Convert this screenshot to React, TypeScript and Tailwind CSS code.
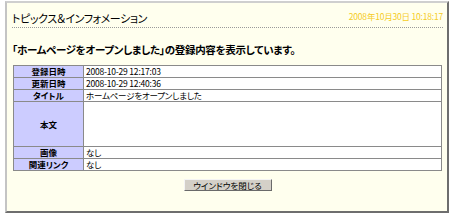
const rows: { label: string; value: string; tall?: boolean }[] = [
  { label: '登録日時', value: '2008-10-29 12:17:03' },
  { label: '更新日時', value: '2008-10-29 12:40:36' },
  { label: 'タイトル', value: 'ホームページをオープンしました' },
  { label: '本文', value: '', tall: true },
  { label: '画像', value: 'なし' },
  { label: '関連リンク', value: 'なし' },
];

export default function App() {
  return (
    <div className="w-[450px] h-[217px] bg-white pt-[1px] font-['Noto_Sans_CJK_JP',sans-serif] text-black [font-feature-settings:'palt']">
      <div className="ml-[5px] w-[444px] h-[212px] bg-[#ffffee] border-2 border-t-[#cfcfcf] border-l-[#c4c4c4] border-r-[#6e6e6e] border-b-[#6e6e6e] pl-[5px] pr-[4px]">
        {/* header */}
        <div className="flex items-center justify-between h-[25px] pt-[6px] border-b border-dotted border-[#9a9a9a]">
          <span className="text-[11px] leading-none tracking-[-0.4px]">トピックス＆インフォメーション</span>
          <span className="text-[8.5px] leading-none tracking-[-0.2px] text-[#f5cc25] -mt-[3px]">2008年10月30日 10:18:17</span>
        </div>

        <p className="mt-[15px] text-[10.5px] leading-[14px] font-bold tracking-[-0.3px]">
          「ホームページをオープンしました」の登録内容を表示しています。
        </p>

        <table className="mt-[8px] ml-[1px] w-[429px] border-collapse border border-[#6a6a6a] text-[8.5px] leading-none">
          <tbody>
            {rows.map((r) => (
              <tr key={r.label} className={r.tall ? 'h-[45px]' : 'h-[12px]'}>
                <th className="w-[70px] bg-[#ccccff] border border-[#8a8a8a] font-bold text-center p-0">
                  {r.label}
                </th>
                <td className="bg-white border border-[#8a8a8a] px-[2px] py-0 text-left align-middle tracking-[-0.2px]">
                  {r.value}
                </td>
              </tr>
            ))}
          </tbody>
        </table>

        <div className="flex justify-center mt-[8px]">
          <button className="w-[88px] h-[12px] bg-[#d4d0c8] border border-t-[#f4f4f4] border-l-[#f4f4f4] border-r-[#6a6a6a] border-b-[#6a6a6a] text-[8.5px] leading-none">
            ウインドウを閉じる
          </button>
        </div>
      </div>
    </div>
  );
}
